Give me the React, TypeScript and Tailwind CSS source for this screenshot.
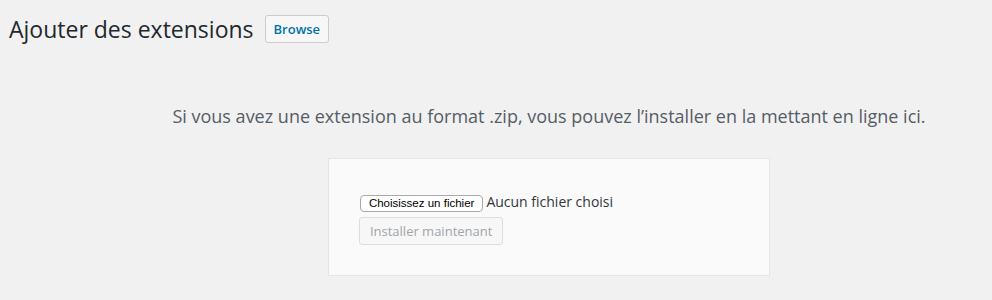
import React from "react";

const openSans = { fontFamily: '"Open Sans", sans-serif' };

const App: React.FC = (): JSX.Element => {
    return (
        <div className="w-[992px] h-[300px] bg-[#f1f1f1] overflow-hidden text-[#444]" style={openSans}>
            {/* header */}
            <div className="flex items-center pl-[9px] pt-[15px]">
                <h1 className="text-[23px] leading-[28px] font-normal text-[#23282d]">
                    Ajouter des extensions
                </h1>
                <button className="ml-[11px] h-[28px] px-[8px] bg-[#f7f7f7] border border-[#cccccc] rounded-[3px] text-[13px] font-semibold text-[#0073aa] leading-[26px]">
                    Browse
                </button>
            </div>

            {/* upload area */}
            <div className="pl-[106px] text-center">
                <p className="mt-[61px] text-[18px] leading-[24px] text-[#555d66]">
                    Si vous avez une extension au format .zip, vous pouvez l’installer en la mettant en ligne ici.
                </p>
                <div className="inline-block mt-[30px] bg-[#fafafa] border border-[#e5e5e5] p-[30px] pr-[156px] text-left">
                    <div className="flex items-center gap-[3px] mt-[6px] ml-[1px]">
                        <span
                            className="h-[17px] px-[8px] bg-white border border-[#aaaaaa] rounded-[4px] text-[11.5px] leading-[15px] text-black"
                            style={{ fontFamily: '"Liberation Sans", Arial, sans-serif' }}
                        >
                            Choisissez un fichier
                        </span>
                        <span className="text-[14px] leading-[17px] text-[#32373c] -mt-[4px]">Aucun fichier choisi</span>
                    </div>
                    <button
                        disabled
                        className="mt-[5px] h-[28px] px-[10px] bg-[#f7f7f7] border border-[#dddddd] rounded-[3px] text-[13px] leading-[26px] text-[#a0a5aa]"
                    >
                        Installer maintenant
                    </button>
                </div>
            </div>
        </div>
    );
};

export default App;
